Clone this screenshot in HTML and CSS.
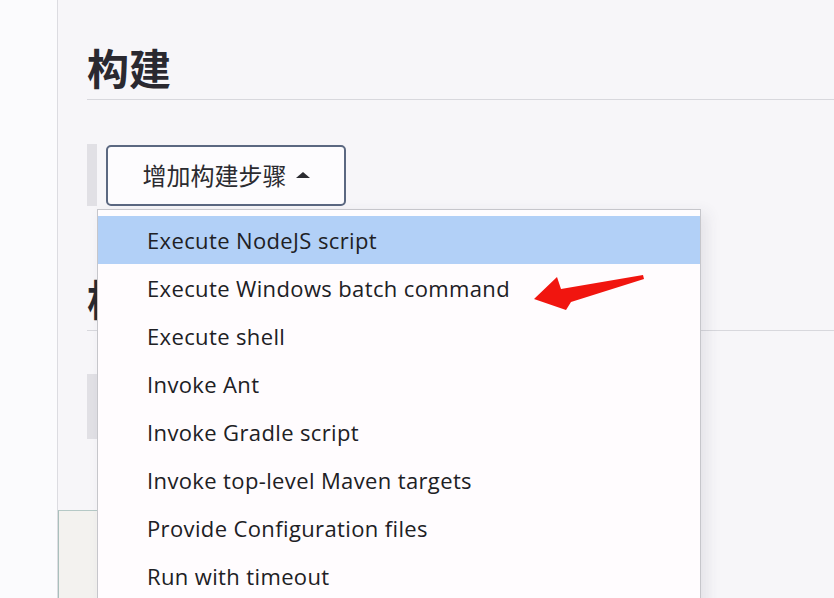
FILE: index.html
```html
<!DOCTYPE html>
<html lang="zh">
<head>
<meta charset="utf-8">
<title>构建</title>
<link rel="stylesheet" href="styles.css">
</head>
<body>
<div class="page">
  <aside class="sidebar"></aside>
  <main class="main">
    <h2 class="section-title">构建</h2>
    <div class="builder">
      <span class="builder-bar"></span>
      <button class="add-step">增加构建步骤 <span class="caret"></span></button>
      <ul class="menu">
        <li class="menu-item active">Execute NodeJS script</li>
        <li class="menu-item">Execute Windows batch command</li>
        <li class="menu-item">Execute shell</li>
        <li class="menu-item">Invoke Ant</li>
        <li class="menu-item">Invoke Gradle script</li>
        <li class="menu-item">Invoke top-level Maven targets</li>
        <li class="menu-item">Provide Configuration files</li>
        <li class="menu-item">Run with timeout</li>
      </ul>
    </div>
    <h2 class="section-title second">构建后操作</h2>
    <div class="post-block"><span class="builder-bar tall"></span></div>
    <div class="footer-bar"></div>
  </main>
  <svg class="annotation" width="834" height="598" viewBox="0 0 834 598">
    <polygon points="534,299 557,277 561,289 643,275 644,279 571,302 566,310" fill="#f1150f"/>
  </svg>
</div>
</body>
</html>
```

FILE: styles.css
```css
* { box-sizing: border-box; }
html, body { margin: 0; padding: 0; }
body {
  font-family: "Open Sans", "Noto Sans CJK SC", sans-serif;
  color: #222;
  background: #f7f6f9;
}
.page {
  position: relative;
  display: flex;
  width: 834px;
  height: 598px;
  overflow: hidden;
}
.sidebar {
  width: 58px;
  flex: none;
  background: #fbfbfd;
  border-right: 1px solid #dcdce1;
}
.main {
  flex: 1;
  background: #f7f6f9;
  padding-left: 29px;
  display: flex;
  flex-direction: column;
}
.section-title {
  margin: 43px 0 0;
  padding-bottom: 8px;
  font-family: "Noto Sans CJK SC", sans-serif;
  font-weight: 700;
  font-size: 42px;
  line-height: 48px;
  color: #2a2930;
  border-bottom: 1px solid #d8d8dd;
  white-space: nowrap;
}
.section-title.second {
  margin-top: 68px;
}
.builder {
  position: relative;
  display: flex;
  align-items: flex-start;
  margin-top: 44px;
}
.builder-bar {
  width: 10px;
  height: 62px;
  background: #e1e0e5;
  flex: none;
}
.builder-bar.tall { height: 65px; }
.add-step {
  margin: 1px 0 0 9px;
  width: 240px;
  height: 61px;
  border: 2px solid #5b6881;
  border-radius: 5px;
  background: #fdfcfe;
  font-family: "Noto Sans CJK SC", sans-serif;
  font-size: 24px;
  color: #2b2b30;
  display: flex;
  align-items: center;
  justify-content: center;
  gap: 4px;
  padding: 0 0 2px 0;
}
.caret {
  width: 0;
  height: 0;
  border-left: 7px solid transparent;
  border-right: 7px solid transparent;
  border-bottom: 6px solid #2b2b30;
  margin-left: 5px;
}
.menu {
  position: absolute;
  left: 10px;
  top: 65px;
  width: 604px;
  height: 420px;
  margin: 0;
  padding: 6px 0 0;
  list-style: none;
  background: #fffcfe;
  border: 1px solid #c6c6cb;
  box-shadow: 6px 4px 14px rgba(60, 60, 80, 0.10);
  z-index: 2;
}
.menu-item {
  height: 48px;
  line-height: 48px;
  padding-left: 49px;
  font-size: 22px;
  letter-spacing: 0.37px;
  color: #202024;
  white-space: nowrap;
}
.menu-item.active {
  background: #b2d0f7;
}
.post-block {
  margin-top: 43px;
  display: flex;
}
.footer-bar {
  margin: 71px 0 0 -29px;
  width: 340px;
  height: 120px;
  background: #f3f2ef;
  border-top: 1px solid #b5c9c6;
  border-left: 1px solid #a9bfbc;
}
.annotation {
  position: absolute;
  left: 0;
  top: 0;
  pointer-events: none;
  z-index: 3;
}
```
